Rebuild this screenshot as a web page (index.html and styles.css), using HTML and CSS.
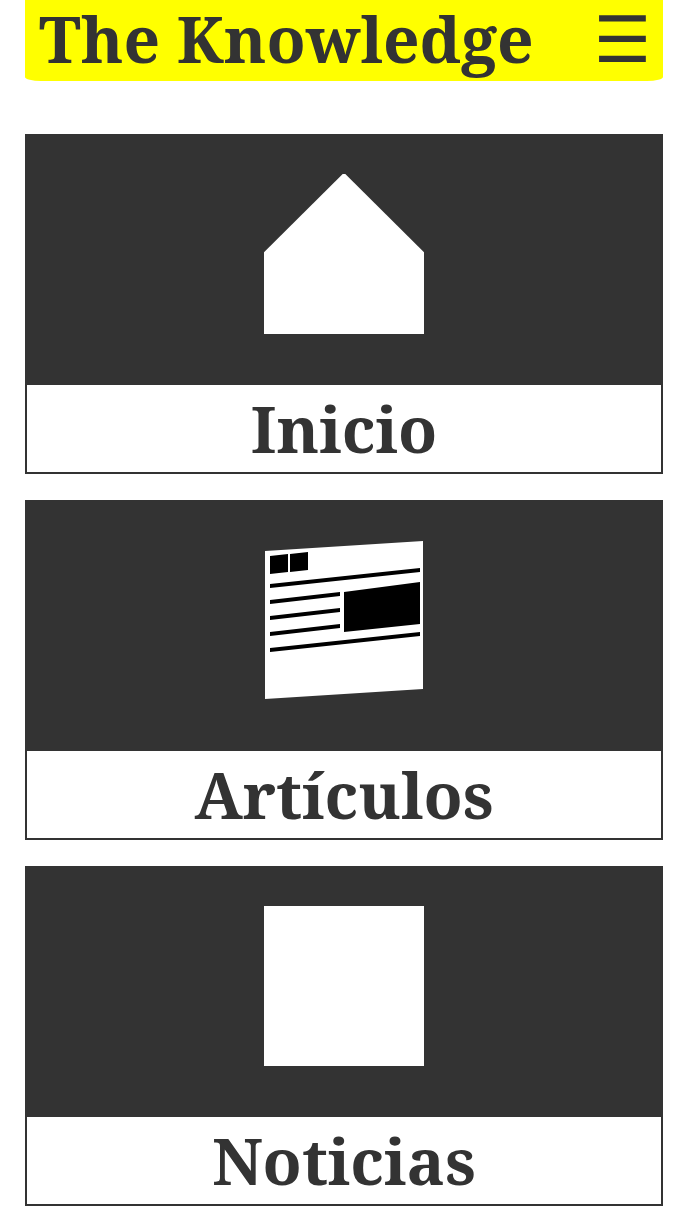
FILE: index.html
```html
<!DOCTYPE html>
<html lang="es">
<head>
    <meta charset="UTF-8">
    <meta name="viewport" content="width=device-width, initial-scale=1.0">
    <title>The Knowledge</title>
    <link rel="stylesheet" href="styles.css">
</head>
<body>
    <header class="site-header">
        <h1 class="site-title">The Knowledge</h1>
        <span class="menu-toggle">&#9776;</span>
    </header>

    <nav class="cards">
        <a class="card" href="#">
            <div class="card-image">
                <svg class="card-icon" viewBox="0 0 160 160">
                    <polygon fill="#fff" points="0,78.300 78.700,0 81.300,0 160,78.300 160,160 0,160"/>
                </svg>
            </div>
            <div class="card-label">Inicio</div>
        </a>

        <a class="card" href="#">
            <div class="card-image">
                <svg class="card-icon" viewBox="0 0 160 160">
                    <polygon fill="#fff" points="1,11 159,1 159,149 1,159"/>
                    <polygon points="6,16 24,14 24,32 6,34"/>
                    <polygon points="26,14 44,12 44,30 26,32"/>
                    <polygon points="6,44 156,28 156,32 6,48"/>
                    <polygon points="6,60 76,52 76,56 6,64"/>
                    <polygon points="6,76 76,68 76,72 6,80"/>
                    <polygon points="6,92 76,84 76,88 6,96"/>
                    <polygon points="80,52 156,42 156,84 80,92"/>
                    <polygon points="6,108 156,92 156,96 6,112"/>
                </svg>
            </div>
            <div class="card-label">Artículos</div>
        </a>

        <a class="card" href="#">
            <div class="card-image">
                <div class="card-icon card-icon-blank"></div>
            </div>
            <div class="card-label">Noticias</div>
        </a>
    </nav>
</body>
</html>
```

FILE: styles.css
```css
body {
    margin: 0 33px 0 25px;
    background-color: #fff;
    color: #333;
    font-family: "Noto Serif", "DejaVu Serif", serif;
}
.site-header {
    display: flex;
    justify-content: space-between;
    height: 81px;
    padding: 0 12px 0 14px;
    box-sizing: border-box;
    background-color: #ff0;
    border-radius: 0 0 16px 16px / 0 0 4px 4px;
}
.site-title {
    margin: 0;
    font-size: 64px;
    font-weight: bold;
    line-height: 77px;
    white-space: nowrap;
}
.menu-toggle {
    font-family: "DejaVu Sans", sans-serif;
    font-size: 64px;
    line-height: 81px;
}
.cards {
    display: flex;
    flex-direction: column;
    gap: 26px;
    margin-top: 53px;
}
.card {
    display: block;
    height: 340px;
    box-sizing: border-box;
    border: 2px solid #333;
    color: #333;
    text-decoration: none;
}
.card-image {
    display: flex;
    justify-content: center;
    height: 249px;
    box-sizing: border-box;
    padding-top: 38px;
    background-color: #333;
}
.card-icon {
    display: block;
    width: 160px;
    height: 160px;
}
.card-icon-blank {
    background-color: #fff;
}
.card-label {
    font-size: 64px;
    font-weight: bold;
    line-height: 87px;
    text-align: center;
}
```
